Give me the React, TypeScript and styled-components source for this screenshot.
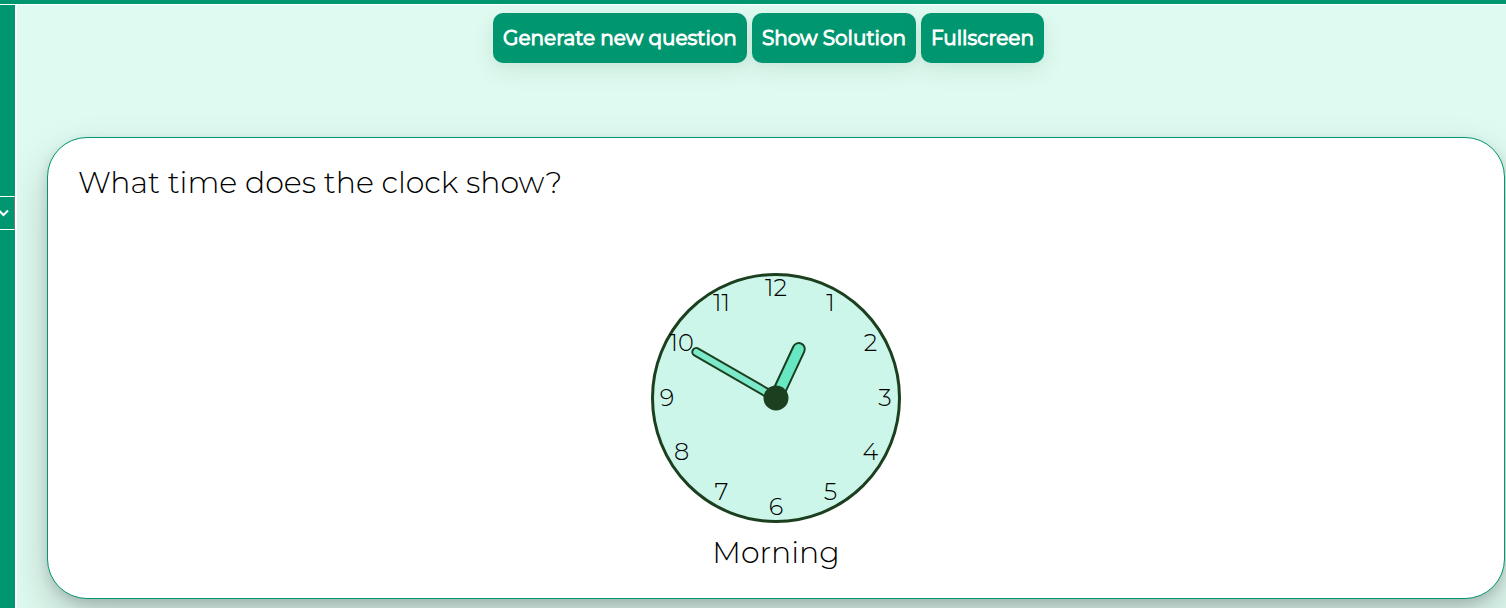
import React from "react";
import styled, { createGlobalStyle } from "styled-components";

const GlobalStyle = createGlobalStyle`
  * { box-sizing: border-box; }
  body {
    margin: 0;
    background: #ffffff;
    color: #000000;
    font-family: Montserrat, Inter, sans-serif;
    overflow: hidden;
  }
`;

const Page = styled.div`
  display: flex;
  flex-direction: column;
  min-height: 100vh;
`;

const TopBar = styled.header`
  height: 4px;
  margin-bottom: 1px;
  background: #009670;
`;

const Body = styled.div`
  display: flex;
  flex: 1;
  gap: 2px;
`;

const Sidebar = styled.nav`
  flex: 0 0 15px;
  padding-top: 191px;
  background: #009670;
`;

const MenuToggle = styled.button`
  display: flex;
  align-items: center;
  width: 15px;
  height: 34px;
  padding: 0;
  border: 1px solid #ffffff;
  border-left: 0;
  border-right-color: #777777;
  background: transparent;
`;

const Main = styled.main`
  flex: 1;
  min-width: 0;
  padding: 8px 1px 9px 30px;
  background: #dffaf0;
  overflow: hidden;
`;

const Toolbar = styled.div`
  display: flex;
  justify-content: center;
  gap: 5px;
  margin: 0 0 74px -15px;
`;

const Action = styled.button`
  height: 50px;
  padding: 0 10px;
  border: 0;
  border-radius: 10px;
  background: #009670;
  box-shadow: 0 8px 24px rgba(0, 80, 50, 0.08), 0 4px 8px rgba(0, 80, 50, 0.04);
  color: #ffffff;
  font: 400 20px/24px Montserrat, Inter, sans-serif;
  -webkit-text-stroke: 1px #ffffff;
  white-space: nowrap;
`;

const Card = styled.section`
  display: flex;
  flex-direction: column;
  align-items: center;
  padding: 25px 30px;
  border: 1px solid #009670;
  border-radius: 40px;
  background: #ffffff;
  box-shadow:
    0 20px 44px rgba(0, 0, 0, 0.18),
    0 5px 12px rgba(0, 0, 0, 0.14);
`;

const Question = styled.h1`
  align-self: stretch;
  margin: 0 0 70px;
  font-size: 30px;
  line-height: 40px;
  font-weight: 300;
`;

const ClockFace = styled.svg`
  width: 250px;
  height: 250px;
`;

const Numeral = styled.text`
  font-size: 24px;
  font-weight: 300;
  text-anchor: middle;
`;

const Period = styled.p`
  margin: 10px 0 0;
  font-size: 30px;
  line-height: 40px;
  font-weight: 300;
`;

function Clock({ hour, minute }: { hour: number; minute: number }) {
  const numerals = Array.from({ length: 12 }, (_, i) => i + 1);
  return (
    <ClockFace viewBox="-125 -125 250 250" role="img" aria-label="Clock">
      <circle r="123.5" fill="#cdf6ea" stroke="#1b3f1f" strokeWidth="3" />
      {numerals.map((n) => {
        const angle = (n * Math.PI) / 6;
        return (
          <Numeral key={n} x={Math.sin(angle) * 109} y={7.5 - Math.cos(angle) * 109.5}>
            {n}
          </Numeral>
        );
      })}
      <g stroke="#1b3f1f" strokeWidth="2">
        <rect x="-6" y="-60" width="12" height="60" rx="6" fill="#68e8c2" transform={`rotate(${hour * 30 + minute / 2})`} />
        <rect x="-4" y="-96" width="8" height="96" rx="4" fill="#7ceaca" transform={`rotate(${minute * 6})`} />
      </g>
      <circle r="12.5" fill="#1b3f1f" />
    </ClockFace>
  );
}

export default function App() {
  return (
    <>
      <GlobalStyle />
      <Page>
        <TopBar />
        <Body>
          <Sidebar>
            <MenuToggle aria-label="Expand menu">
              <svg width="9" height="8" viewBox="0 0 9 8" fill="none" stroke="#fff" strokeWidth="2">
                <path d="M-1 1.5 3.5 6 8 1.5" />
              </svg>
            </MenuToggle>
          </Sidebar>
          <Main>
            <Toolbar>
              <Action>Generate new question</Action>
              <Action>Show Solution</Action>
              <Action>Fullscreen</Action>
            </Toolbar>
            <Card>
              <Question>What time does the clock show?</Question>
              <Clock hour={0} minute={50} />
              <Period>Morning</Period>
            </Card>
          </Main>
        </Body>
      </Page>
    </>
  );
}
